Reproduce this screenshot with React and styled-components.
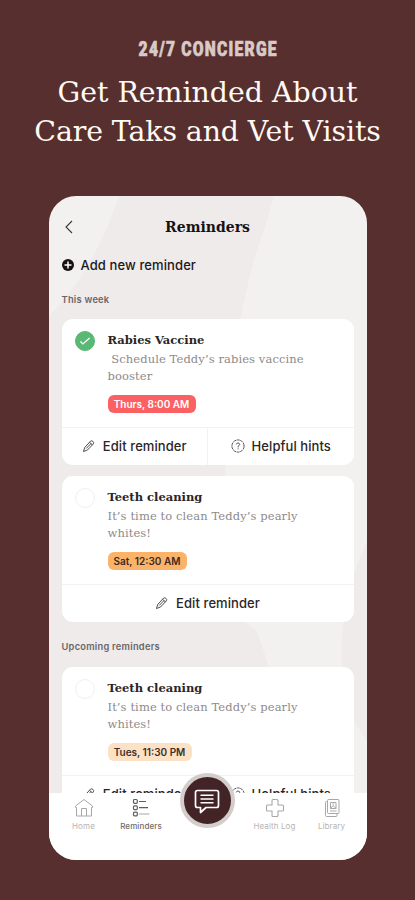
import styled, { createGlobalStyle } from "styled-components";

const GlobalStyle = createGlobalStyle`
    * {
        box-sizing: border-box;
    }
    body {
        margin: 0;
        background-color: #572f2f;
    }
    h1, h2, h3, p {
        margin: 0;
    }
    button {
        border: none;
        background: none;
        padding: 0;
    }
`;

const serif = `"DejaVu Serif", serif`;
const sans = `Inter, "Liberation Sans", sans-serif`;

const Page = styled.main`
    height: 900px;
    overflow: hidden;
    display: flex;
    flex-direction: column;
    align-items: center;
    background-color: #572f2f;
`;

const Eyebrow = styled.p`
    margin-top: 37px;
    height: 24px;
    line-height: 24px;
    font-family: Roboto, sans-serif;
    font-size: 20px;
    font-weight: 900;
    letter-spacing: 1.6px;
    white-space: nowrap;
    color: #d8cac7;
    -webkit-text-stroke: 0.7px #d8cac7;
    transform: translateX(1px) scaleX(0.78);
`;

const Headline = styled.h1`
    margin-top: 12px;
    height: 123px;
    font-family: ${serif};
    font-size: 28.4px;
    font-weight: 400;
    line-height: 39px;
    text-align: center;
    white-space: nowrap;
    color: #fffaf4;
`;

const Line = styled.span`
    display: block;
    letter-spacing: ${({ $spacing }) => $spacing};
`;

const Phone = styled.div`
    position: relative;
    width: 318px;
    height: 664px;
    display: flex;
    flex-direction: column;
    overflow: hidden;
    border-radius: 27px;
    background-color: #f3f1ef;
`;

const Backdrop = styled.svg`
    position: absolute;
    top: 0;
    left: 0;
`;

const Screen = styled.div`
    position: relative;
    height: 597px;
    flex-shrink: 0;
    overflow: hidden;
    padding: 0 13px;
`;

const TopBar = styled.header`
    display: grid;
    grid-template-columns: 16px 1fr 16px;
    align-items: center;
    height: 62px;
    svg {
        display: block;
    }
`;

const Title = styled.h2`
    font-family: ${serif};
    font-size: 14px;
    font-weight: 700;
    text-align: center;
    color: #171314;
`;

const AddButton = styled.button`
    display: flex;
    align-items: center;
    gap: 7px;
    height: 14px;
    font-family: ${sans};
    font-size: 13px;
    font-weight: 500;
    letter-spacing: 0.1px;
    white-space: nowrap;
    color: #1c1819;
`;

const SectionLabel = styled.h3`
    height: 14px;
    margin: ${({ $top }) => $top} 0 ${({ $bottom }) => $bottom};
    font-family: ${sans};
    font-size: 9.3px;
    font-weight: 600;
    line-height: 14px;
    letter-spacing: 0.25px;
    color: #6b6566;
`;

const Card = styled.article`
    height: 146px;
    margin-bottom: 11px;
    border-radius: 11px;
    background-color: #fff;
`;

const CardBody = styled.div`
    display: grid;
    grid-template-columns: 20px 1fr;
    gap: 13px;
    height: 108px;
    padding: 12px 13px 0;
`;

const Check = styled.span`
    display: flex;
    align-items: center;
    justify-content: center;
    width: 20px;
    height: 20px;
    border-radius: 50%;
    border: 1px solid ${({ $done }) => ($done ? "#58b874" : "#f1f0f0")};
    background-color: ${({ $done }) => ($done ? "#58b874" : "#fff")};
`;

const CardTitle = styled.h3`
    height: 20px;
    font-family: ${serif};
    font-size: 11.5px;
    font-weight: 700;
    line-height: 18px;
    color: #2b2526;
`;

const Description = styled.p`
    height: 44px;
    font-family: ${serif};
    font-size: 11.5px;
    line-height: 17px;
    letter-spacing: 0.1px;
    white-space: pre;
    color: #8e8a8a;
`;

const Badge = styled.span`
    display: block;
    width: ${({ $width }) => $width};
    height: 18px;
    border-radius: 6px;
    font-family: ${sans};
    font-size: 10px;
    font-weight: 600;
    line-height: 18px;
    text-align: center;
    white-space: nowrap;
    color: ${({ $color }) => $color};
    background-color: ${({ $background }) => $background};
`;

const Actions = styled.div`
    display: flex;
    height: 38px;
    border-top: 1px solid #f3f1f1;
`;

const Action = styled.button`
    flex: 1;
    display: flex;
    align-items: center;
    justify-content: center;
    gap: 7px;
    padding-bottom: 2px;
    font-family: ${sans};
    font-size: 13px;
    font-weight: 500;
    letter-spacing: 0.08px;
    white-space: nowrap;
    color: #2a2526;
    & + & {
        border-left: 1px solid #f3f1f1;
    }
`;

const TabBar = styled.nav`
    position: relative;
    display: grid;
    grid-template-columns: 58px 57px 73px 64px 50px;
    height: 67px;
    padding: 5px 6px 0;
    background-color: #fff;
`;

const Tab = styled.button`
    display: flex;
    flex-direction: column;
    align-items: center;
    gap: 3px;
    height: 34px;
    font-family: ${sans};
    font-size: 8px;
    font-weight: ${({ $active }) => ($active ? 500 : 400)};
    line-height: 10px;
    letter-spacing: 0.1px;
    white-space: nowrap;
    color: ${({ $active }) => ($active ? "#716b6c" : "#b7b3b4")};
`;

const ChatButton = styled.button`
    position: absolute;
    left: 131px;
    top: -20px;
    display: flex;
    align-items: center;
    justify-content: center;
    width: 55px;
    height: 55px;
    border: 4px solid #d3cdcb;
    border-radius: 50%;
    background-color: #432426;
`;

const BackIcon = () => (
    <svg width="16" height="16" viewBox="0 0 16 16" fill="none" stroke="#3d3839" strokeWidth="1.1">
        <path d="M10 2 4 8l6 6" />
    </svg>
);

const PlusIcon = () => (
    <svg width="12" height="12" viewBox="0 0 12 12">
        <circle cx="6" cy="6" r="6" fill="#161213" />
        <path d="M6 2.5v7M2.5 6h7" stroke="#fff" strokeWidth="1.5" />
    </svg>
);

const TickIcon = () => (
    <svg width="12" height="10" viewBox="0 0 14 12" fill="none" stroke="#fff" strokeWidth="1.6">
        <path d="m1.5 6.5 3 3 8-7" />
    </svg>
);

const PencilIcon = () => (
    <svg width="14" height="14" viewBox="0 0 14 14" fill="none" stroke="#3d3839" strokeWidth="0.9">
        <path d="m1.5 12.5 1.2-4L8.5 2.2q1-.9 2.4.2t.4 2.5L5.5 11zM7.500 3.200l2.700 2.600M9 4.500l-4.800 5" />
    </svg>
);

const HintIcon = () => (
    <svg width="14" height="14" viewBox="0 0 14 14" fill="none" stroke="#5b5657" strokeWidth="1">
        <circle cx="7" cy="7" r="6.1" strokeDasharray="3.2 0.6" />
        <path d="M5.3 5.4q.2-1.4 1.8-1.4 1.7.1 1.6 1.6Q8.5 6.5 7.1 7.2v1.2M7.1 9.4v1" />
    </svg>
);

const HomeIcon = () => (
    <svg width="20" height="20" viewBox="0 0 20 20" fill="none" stroke="#aaa6a7" strokeWidth="1" strokeLinejoin="round">
        <path d="M1.5 8.5v-.5L10 1.5 18.5 8v1.500h-1V18h-15V9.500h-1zM7.500 18v-7.500h5V18" />
    </svg>
);

const ListIcon = () => (
    <svg width="20" height="20" viewBox="0 0 20 20" fill="none" stroke="#625c5d" strokeWidth="1.2">
        <rect x="2.5" y="1.5" width="3.800" height="3.800" rx="1" />
        <rect x="2.5" y="7.800" width="3.800" height="3.800" rx="1" />
        <rect x="2.5" y="14.100" width="3.800" height="3.800" rx="1" />
        <path d="M8 3.5h7M8 9.7h9" />
        <path d="M8 16h10.500" stroke="#a9a5a5" />
    </svg>
);

const HealthIcon = () => (
    <svg width="20" height="20" viewBox="0 0 20 20" fill="none" stroke="#aaa6a7" strokeWidth="1.1">
        <path d="M8 1.500h4q1 0 1 1V7h4.500q1 0 1 1v4q0 1-1 1H13v4.500q0 1-1 1H8q-1 0-1-1V13H2.500q-1 0-1-1V8q0-1 1-1H7V2.500q0-1 1-1z" />
    </svg>
);

const LibraryIcon = () => (
    <svg width="20" height="20" viewBox="0 0 20 20" fill="none" stroke="#aaa6a7" strokeWidth="1">
        <path d="M6.500 1.500H16q1 0 1 1v12q0 1-1 1H6.500q-1 0-1-1v-12q0-1 1-1zM5.500 3.500h-1q-1 0-1 1v13q0 1 1 1H14q1 0 1-1v-2M8 13h6.500" />
        <path d="M8.500 4.500H14v6H8.500zM8.500 10.500l2.700-3L14 10.500M10.500 6h1.500" />
    </svg>
);

const ChatIcon = () => (
    <svg width="28" height="28" viewBox="0 0 28 28" fill="none" stroke="#fff" strokeWidth="1.7">
        <path d="M4.500 3.500h19q2 0 2 2v13q0 2-2 2H13L7.500 25.500v-5h-3q-2 0-2-2v-13q0-2 2-2z" strokeLinejoin="round" />
        <path d="M7.500 8.200h13M7.500 12h13M7.500 15.800h13" strokeWidth="1.500" />
    </svg>
);

const ReminderCard = ({ title, text, time, badge, done, hints }) => (
    <Card>
        <CardBody>
            <Check $done={done}>{done && <TickIcon />}</Check>
            <div>
                <CardTitle>{title}</CardTitle>
                <Description>{text}</Description>
                <Badge $width={badge.width} $color={badge.color} $background={badge.background}>
                    {time}
                </Badge>
            </div>
        </CardBody>
        <Actions>
            <Action>
                <PencilIcon />
                Edit reminder
            </Action>
            {hints && (
                <Action>
                    <HintIcon />
                    Helpful hints
                </Action>
            )}
        </Actions>
    </Card>
);

const badges = {
    red: { width: "88px", color: "#fff", background: "#fb6163" },
    orange: { width: "79px", color: "#3d2a1e", background: "#fab368" },
    cream: { width: "84px", color: "#3d302a", background: "#fce1c4" },
};

const App = () => (
    <Page>
        <GlobalStyle />
        <Eyebrow>24/7 CONCIERGE</Eyebrow>
        <Headline>
            <Line $spacing="0px">Get Reminded About</Line>
            <Line $spacing="-0.1px">Care Taks and Vet Visits</Line>
        </Headline>
        <Phone>
            <Backdrop width="318" height="597" viewBox="0 0 318 597">
                <path d="M70 0h155q-8 30-19 60-8 30-15 65l-15 155 12 140 20 15 15 45 10 117H0V120Q45 75 70 0z" fill="#efebeb" />
                <path d="M318 345q-38 80-20 170l20 30z" fill="#efebeb" />
            </Backdrop>
            <Screen>
                <TopBar>
                    <BackIcon />
                    <Title>Reminders</Title>
                </TopBar>
                <AddButton>
                    <PlusIcon />
                    Add new reminder
                </AddButton>
                <SectionLabel $top="21px" $bottom="12px">This week</SectionLabel>
                <ReminderCard
                    title="Rabies Vaccine"
                    text={" Schedule Teddy’s rabies vaccine\nbooster"}
                    time="Thurs, 8:00 AM"
                    badge={badges.red}
                    done
                    hints
                />
                <ReminderCard
                    title="Teeth cleaning"
                    text={"It’s time to clean Teddy’s pearly\nwhites!"}
                    time="Sat, 12:30 AM"
                    badge={badges.orange}
                />
                <SectionLabel $top="18px" $bottom="13px">Upcoming reminders</SectionLabel>
                <ReminderCard
                    title="Teeth cleaning"
                    text={"It’s time to clean Teddy’s pearly\nwhites!"}
                    time="Tues, 11:30 PM"
                    badge={badges.cream}
                    hints
                />
            </Screen>
            <TabBar>
                <Tab>
                    <HomeIcon />
                    Home
                </Tab>
                <Tab $active>
                    <ListIcon />
                    Reminders
                </Tab>
                <span />
                <Tab>
                    <HealthIcon />
                    Health Log
                </Tab>
                <Tab>
                    <LibraryIcon />
                    Library
                </Tab>
                <ChatButton aria-label="Chat">
                    <ChatIcon />
                </ChatButton>
            </TabBar>
        </Phone>
    </Page>
);

export default App;
